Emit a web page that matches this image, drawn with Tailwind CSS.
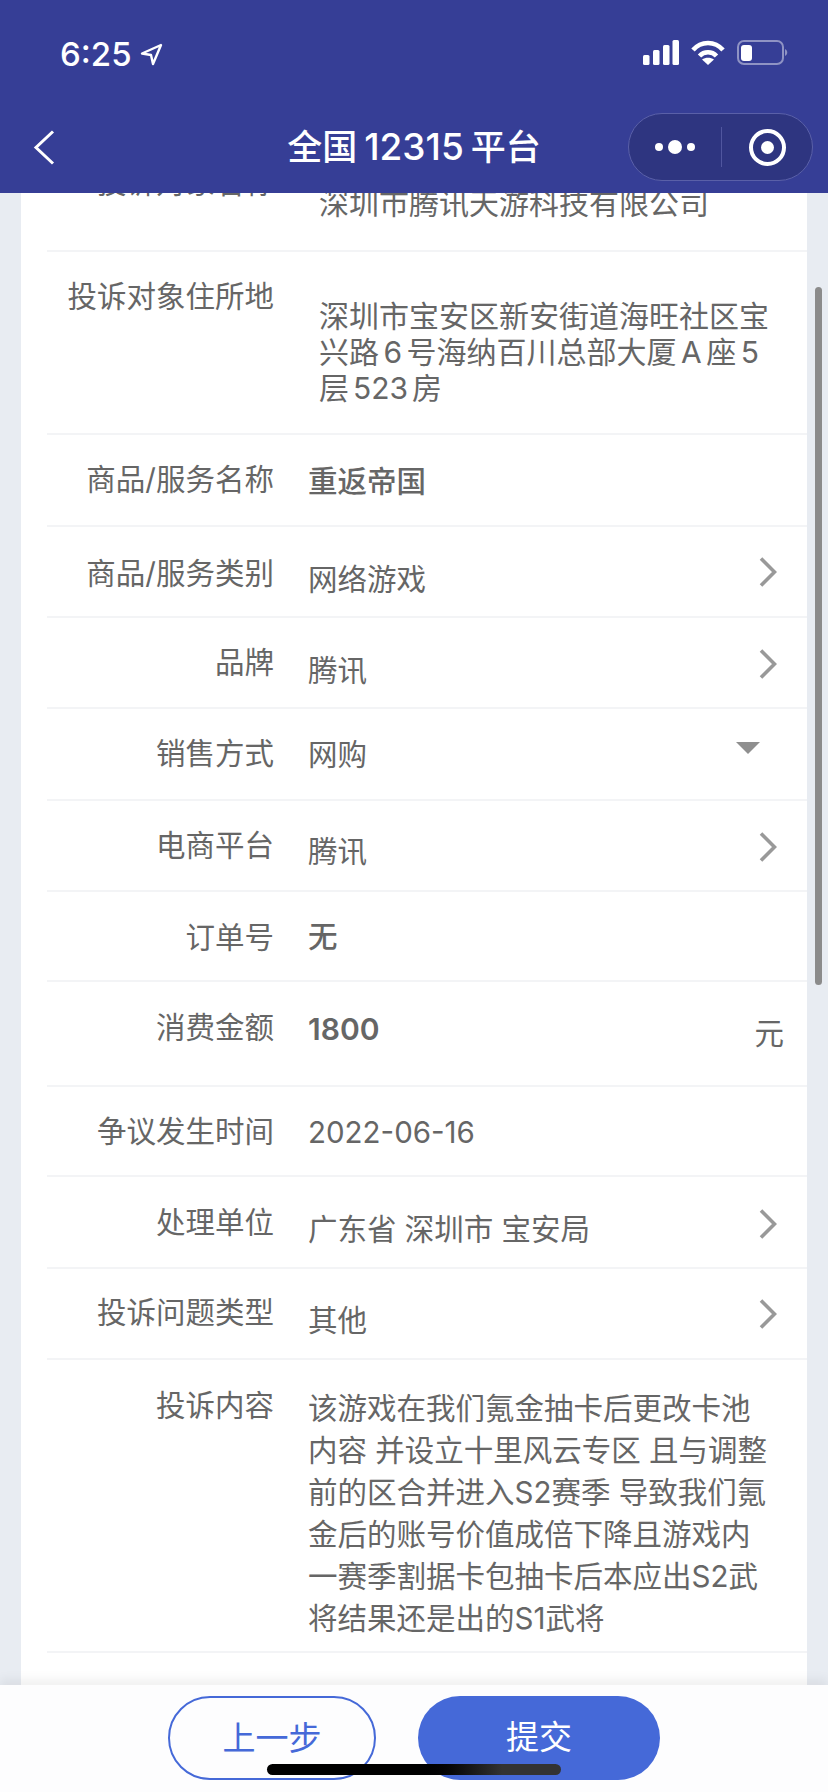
<!DOCTYPE html>
<html lang="zh">
<head>
<meta charset="utf-8">
<script src="https://cdn.jsdelivr.net/npm/@tailwindcss/browser@4"></script>
</head>
<body class="m-0">
<div class="relative flex h-[1792px] w-[828px] flex-col overflow-hidden bg-[#e8ecf2] font-['Inter','Noto_Sans_CJK_SC',sans-serif] text-[29.5px] leading-[36px] text-[#666666]">
  <!-- top bar -->
  <header class="relative z-10 h-[193px] shrink-0 bg-[#363e96] text-white">
    <div class="flex h-[113px] items-start justify-between pt-[37px] pr-[39px] pl-[60px]">
      <div class="flex items-center gap-[8px]">
        <span class="text-[33px] leading-[34px] font-medium">6:25</span>
        <svg width="23" height="23" viewBox="0 0 23 23" fill="none" stroke="white" stroke-width="2.400" stroke-linejoin="round"><path d="M21 2 L2 10.500 L11 12 L13 21 Z"/></svg>
      </div>
      <div class="flex items-center gap-[12px] pt-[3px]">
        <svg width="36" height="25" viewBox="0 0 36 25" fill="white"><rect x="0" y="15" width="6.500" height="10" rx="1.500"/><rect x="10" y="10" width="6.500" height="15" rx="1.500"/><rect x="20" y="5" width="6.500" height="20" rx="1.500"/><rect x="29.500" y="0" width="6.500" height="25" rx="1.500"/></svg>
        <svg width="34" height="25" viewBox="0 0 34 25" fill="none" stroke="white" stroke-width="4.500"><path d="M2 10 C10 0.500 24 0.500 32 10"/><path d="M8.500 16 C13 11 21 11 25.500 16"/><path fill="white" stroke="none" d="M17 25 L11 19.500 C14.500 17 19.500 17 23 19.500 Z"/></svg>
        <svg width="52" height="25" viewBox="0 0 52 25" fill="none"><rect x="1" y="1" width="45" height="23" rx="6" stroke="#8f93c4" stroke-width="2"/><rect x="4" y="5" width="11" height="16" rx="3" fill="white"/><path d="M48 9 C51 10.500 51 14.500 48 16 Z" fill="#8f93c4"/></svg>
      </div>
    </div>
    <div class="relative flex items-center justify-center">
      <svg class="absolute left-[33px] top-[17px]" width="22" height="35" viewBox="0 0 22 35" fill="none" stroke="white" stroke-width="3"><path d="M20 1.500 L3 17.500 L20 33.500"/></svg>
      <div class="pt-[10px] text-[35px] leading-[48px] font-medium">全国<span class="mx-[7px] text-[37px]">12315</span>平台</div>
      <div class="absolute left-[628px] top-0 flex h-[68px] w-[185px] items-center rounded-full border border-[#5a60a8] bg-[#2e3580]">
        <div class="flex w-[92px] items-center justify-center gap-[5px]">
          <span class="h-[8px] w-[8px] rounded-full bg-white"></span>
          <span class="h-[14px] w-[14px] rounded-full bg-white"></span>
          <span class="h-[8px] w-[8px] rounded-full bg-white"></span>
        </div>
        <div class="h-[40px] w-px bg-[#50569f]"></div>
        <div class="flex flex-1 items-center justify-center">
          <div class="flex h-[37px] w-[37px] items-center justify-center rounded-full border-[4px] border-white">
            <span class="h-[13px] w-[13px] rounded-full bg-white"></span>
          </div>
        </div>
      </div>
    </div>
  </header>

  <!-- form -->
  <main class="min-h-0 flex-1 overflow-hidden px-[21px]">
    <div class="-mt-[34px] bg-white pl-[26px]">
      <div class="flex h-[93px] items-start border-b-2 border-[#f3f4f6]">
        <div class="mt-[5px] w-[227px] shrink-0 text-right">投诉对象名称</div>
        <div class="mt-[26px] ml-[45px] text-[30px]">深圳市腾讯天游科技有限公司</div>
      </div>
      <div class="flex h-[183px] items-start border-b-2 border-[#f3f4f6]">
        <div class="mt-[26px] w-[227px] shrink-0 text-right">投诉对象住所地</div>
        <div class="mt-[46px] ml-[45px] text-[30px]">深圳市宝安区新安街道海旺社区宝<br>兴路<span class="mx-[4.500px]">6</span>号海纳百川总部大厦<span class="mx-[4.500px]">A</span>座<span class="ml-[4.500px]">5</span><br>层<span class="mx-[4px]">523</span>房</div>
      </div>
      <div class="flex h-[92px] items-start border-b-2 border-[#f3f4f6]">
        <div class="mt-[26px] w-[227px] shrink-0 text-right">商品/服务名称</div>
        <div class="mt-[28px] ml-[34px] font-medium">重返帝国</div>
      </div>
      <div class="flex h-[91px] items-start border-b-2 border-[#f3f4f6]">
        <div class="mt-[28px] w-[227px] shrink-0 text-right">商品/服务类别</div>
        <div class="mt-[34px] ml-[34px]">网络游戏</div>
        <svg class="mt-[30px] mr-[30px] ml-auto" width="18" height="30" viewBox="0 0 18 30" fill="none" stroke="#999999" stroke-width="3.600"><path d="M2 1.500 L15.500 15 L2 28.500"/></svg>
      </div>
      <div class="flex h-[91px] items-start border-b-2 border-[#f3f4f6]">
        <div class="mt-[26px] w-[227px] shrink-0 text-right">品牌</div>
        <div class="mt-[34px] ml-[34px]">腾讯</div>
        <svg class="mt-[31px] mr-[30px] ml-auto" width="18" height="30" viewBox="0 0 18 30" fill="none" stroke="#999999" stroke-width="3.600"><path d="M2 1.500 L15.500 15 L2 28.500"/></svg>
      </div>
      <div class="flex h-[92px] items-start border-b-2 border-[#f3f4f6]">
        <div class="mt-[26px] w-[227px] shrink-0 text-right">销售方式</div>
        <div class="mt-[27px] ml-[34px]">网购</div>
        <svg class="mt-[33px] mr-[47px] ml-auto" width="24" height="12" viewBox="0 0 24 12" fill="#8f8f8f"><path d="M0 0 H24 L12 12 Z"/></svg>
      </div>
      <div class="flex h-[91px] items-start border-b-2 border-[#f3f4f6]">
        <div class="mt-[26px] w-[227px] shrink-0 text-right">电商平台</div>
        <div class="mt-[32px] ml-[34px]">腾讯</div>
        <svg class="mt-[31px] mr-[30px] ml-auto" width="18" height="30" viewBox="0 0 18 30" fill="none" stroke="#999999" stroke-width="3.600"><path d="M2 1.500 L15.500 15 L2 28.500"/></svg>
      </div>
      <div class="flex h-[90px] items-start border-b-2 border-[#f3f4f6]">
        <div class="mt-[27px] w-[227px] shrink-0 text-right">订单号</div>
        <div class="mt-[26px] ml-[34px] font-medium">无</div>
      </div>
      <div class="flex h-[105px] items-start border-b-2 border-[#f3f4f6]">
        <div class="mt-[27px] w-[227px] shrink-0 text-right">消费金额</div>
        <div class="mt-[29px] ml-[34px] text-[30px] font-semibold">1800</div>
        <div class="mt-[33px] mr-[23px] ml-auto">元</div>
      </div>
      <div class="flex h-[90px] items-start border-b-2 border-[#f3f4f6]">
        <div class="mt-[26px] w-[227px] shrink-0 text-right">争议发生时间</div>
        <div class="mt-[27px] ml-[34px]">2022-06-16</div>
      </div>
      <div class="flex h-[92px] items-start border-b-2 border-[#f3f4f6]">
        <div class="mt-[27px] w-[227px] shrink-0 text-right">处理单位</div>
        <div class="mt-[34px] ml-[34px]">广东省 深圳市 宝安局</div>
        <svg class="mt-[32px] mr-[30px] ml-auto" width="18" height="30" viewBox="0 0 18 30" fill="none" stroke="#999999" stroke-width="3.600"><path d="M2 1.500 L15.500 15 L2 28.500"/></svg>
      </div>
      <div class="flex h-[91px] items-start border-b-2 border-[#f3f4f6]">
        <div class="mt-[25px] w-[227px] shrink-0 text-right">投诉问题类型</div>
        <div class="mt-[33px] ml-[34px]">其他</div>
        <svg class="mt-[30px] mr-[30px] ml-auto" width="18" height="30" viewBox="0 0 18 30" fill="none" stroke="#999999" stroke-width="3.600"><path d="M2 1.500 L15.500 15 L2 28.500"/></svg>
      </div>
      <div class="flex h-[293px] items-start border-b-2 border-[#f3f4f6]">
        <div class="mt-[27px] w-[227px] shrink-0 text-right">投诉内容</div>
        <div class="mt-[27px] ml-[34px] leading-[42px]">该游戏在我们氪金抽卡后更改卡池<br>内容 并设立十里风云专区 且与调整<br>前的区合并进入S2赛季 导致我们氪<br>金后的账号价值成倍下降且游戏内<br>一赛季割据卡包抽卡后本应出S2武<br>将结果还是出的S1武将</div>
      </div>
      <div class="flex h-[92px] items-start">
        <div class="mt-[29px] w-[227px] shrink-0 text-right">投诉诉求</div>
      </div>
    </div>
  </main>

  <!-- bottom actions -->
  <footer class="relative z-10 flex h-[107px] shrink-0 justify-center gap-[42px] bg-[#fdfdfe] pt-[11px] shadow-[0_-6px_10px_rgba(0,0,0,0.06)]">
    <button class="h-[84px] w-[208px] rounded-full border-2 border-[#4569d8] text-[33px] text-[#4569d8]">上一步</button>
    <button class="h-[84px] w-[242px] rounded-full bg-[#4569d8] pb-[2px] text-[33px] text-white">提交</button>
  </footer>

  <!-- scrollbar and home indicator overlays -->
  <div class="absolute top-[287px] left-[815px] z-20 h-[698px] w-[7px] rounded-full bg-[#8b8b8b]"></div>
  <div class="absolute top-[1764px] left-[267px] z-20 h-[11px] w-[294px] rounded-full bg-gradient-to-r from-black from-50% to-[#333333] to-80%"></div>
</div>
</body>
</html>
